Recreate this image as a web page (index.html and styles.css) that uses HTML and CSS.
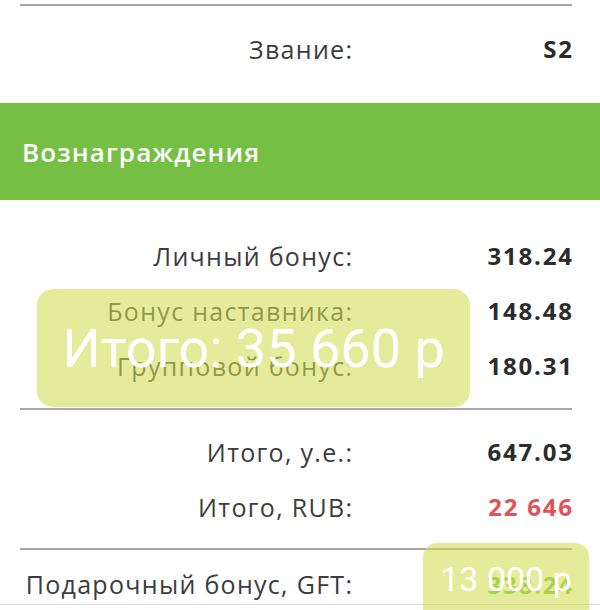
FILE: index.html
```html
<!DOCTYPE html>
<html lang="ru">
<head>
<meta charset="utf-8">
<link rel="stylesheet" href="styles.css">
</head>
<body>
<div class="page">
  <div class="rule rule-top"></div>
  <section class="block block-rank">
    <div class="row"><span class="label">Звание:</span><span class="value">S2</span></div>
  </section>

  <header class="band"><h2 class="band-title">Вознаграждения</h2></header>

  <section class="block block-bonus">
    <div class="row"><span class="label">Личный бонус:</span><span class="value">318.24</span></div>
    <div class="row"><span class="label">Бонус наставника:</span><span class="value">148.48</span></div>
    <div class="row"><span class="label">Групповой бонус:</span><span class="value">180.31</span></div>
  </section>
  <div class="rule"></div>
  <section class="block block-total">
    <div class="row"><span class="label">Итого, у.е.:</span><span class="value">647.03</span></div>
    <div class="row"><span class="label">Итого, RUB:</span><span class="value value-red">22 646</span></div>
  </section>
  <div class="rule"></div>
  <section class="block block-gift">
    <div class="row row-gift"><span class="label">Подарочный бонус, GFT:</span><span class="value value-green">338.24</span></div>
  </section>
  <div class="bottom-line"></div>

  <div class="bubble bubble-total">Итого: 35 660 р</div>
  <div class="bubble bubble-gift">13 000 р</div>
</div>
</body>
</html>
```
FILE: styles.css
```css
html, body {
  margin: 0;
  padding: 0;
  background: #ffffff;
}
.page {
  position: relative;
  width: 600px;
  height: 610px;
  overflow: hidden;
  font-family: "Open Sans", "DejaVu Sans", sans-serif;
  color: #3a3a3a;
}
.rule {
  height: 2px;
  margin: 0 28px 0 20px;
  background: #a8a8a8;
}
.rule-top {
  margin-top: 4px;
}
.block-rank {
  padding: 15px 0 27px;
}
.row {
  display: grid;
  grid-template-columns: 332px 220px;
  margin-left: 20px;
  height: 55px;
  align-items: center;
}
.label {
  text-align: right;
  font-size: 25px;
  font-weight: 400;
  letter-spacing: 1.3px;
  margin-right: -1.3px;
  color: #3c3c3c;
}
.value {
  text-align: right;
  font-size: 24px;
  font-weight: 700;
  letter-spacing: 1.8px;
  margin-right: -1.8px;
  color: #2b2b2b;
}
.value-red {
  color: #e0525a;
}
.value-green {
  color: #7cc147;
}
.band {
  height: 97px;
  background: #76bf45;
  display: flex;
  align-items: center;
  padding-left: 22px;
}
.band-title {
  margin: 0;
  font-size: 26px;
  font-weight: 600;
  letter-spacing: 1.1px;
  color: #ffffff;
}
.block-bonus {
  padding: 28px 0 15px;
}
.block-total {
  padding: 14px 0 14px;
}
.block-gift {
  padding-top: 14px;
  height: 40px;
}
.row-gift {
  height: 40px;
}
.bottom-line {
  height: 1px;
  background: #dcdcdc;
}
.bubble {
  position: absolute;
  display: flex;
  align-items: center;
  justify-content: center;
  background: rgba(207, 221, 81, 0.57);
  color: #ffffff;
  font-family: Roboto, "Noto Sans", sans-serif;
  font-weight: 400;
}
.bubble-total {
  left: 37px;
  top: 289px;
  width: 433px;
  height: 118px;
  border-radius: 16px;
  font-size: 54px;
}
.bubble-gift {
  left: 423px;
  top: 543px;
  width: 166px;
  height: 80px;
  border-radius: 14px;
  font-size: 34px;
  align-items: flex-start;
  padding-top: 16px;
  box-sizing: border-box;
}
```
